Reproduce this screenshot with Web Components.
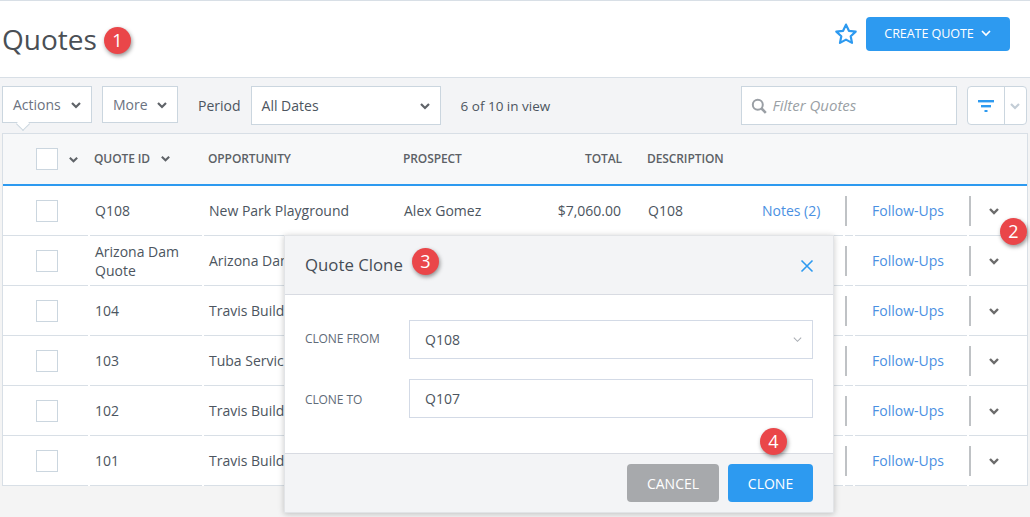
<!DOCTYPE html>
<html lang="en"><head><meta charset="utf-8"><title>Quotes</title>
<style>
html,body{margin:0;padding:0}
body{width:1030px;height:517px;overflow:hidden;background:#f4f4f4;font-family:"Open Sans",sans-serif;color:#4c5560}
</style></head><body>
<quotes-page></quotes-page>
<script>
const chev=(w=12,c='#5f6368',sw=2.4)=>`<svg width="${w}" height="${w}" viewBox="0 0 12 12" fill="none" stroke="${c}" stroke-width="${sw}" style="display:block;flex:none"><path d="M2 4l4 4 4-4"/></svg>`;
function def(name,css,html){
  customElements.define(name,class extends HTMLElement{
    constructor(){super();const r=this.attachShadow({mode:'open'});
      r.innerHTML=`<style>${css}</style>${typeof html==='function'?html(this):html}`;}
    connectedCallback(){ if(typeof html==='function'){this.shadowRoot.innerHTML=`<style>${css}</style>${html(this)}`;} }
  });
}
def('num-badge',`:host{position:absolute;width:27px;height:27px;border-radius:50%;background:#ea4649;color:#fff;font:400 18px/27px "Open Sans",sans-serif;text-align:center;box-shadow:1px 2px 4px rgba(0,0,0,.42)}`,`<slot></slot>`);

def('page-header',`:host{display:flex;align-items:center;justify-content:space-between;height:76px;background:#fff;border-top:1px solid #d8dfe6;border-bottom:1px solid #d8dfe6;box-sizing:content-box}
h1{margin:0 0 0 2px;font:400 28px/40px "Open Sans",sans-serif;color:#4a4f55}
.r{display:flex;align-items:center;gap:8px;margin:0 20px 10px 0}
.btn{display:flex;align-items:center;justify-content:center;gap:6px;width:144px;height:34px;box-sizing:border-box;padding-bottom:2px;background:#2d9af0;border-radius:4px;color:#fff;font:400 12.6px "Open Sans",sans-serif;letter-spacing:-.1px}`,
`<h1><slot></slot></h1><div class="r"><svg width="24" height="24" viewBox="0 0 24 24" fill="none" stroke="#2d9af0" stroke-width="2.2" stroke-linejoin="round"><path d="M12 2.6l2.9 6.2 6.8.8-5 4.6 1.3 6.7-6-3.3-6 3.3 1.3-6.7-5-4.6 6.8-.8z"/></svg><div class="btn">CREATE QUOTE ${chev(12,'#fff',1.7)}</div></div>`);

def('drop-btn',`:host{display:flex;align-items:center;box-sizing:border-box;height:37px;background:#fff;border:1px solid #cbd6df;color:#6b7280;font:400 14px "Open Sans",sans-serif;padding:0 9px 0 10px;justify-content:space-between;position:relative;margin-bottom:2px}
:host([notch])::after{content:"";position:absolute;left:15px;bottom:-7px;width:9px;height:9px;background:#fff;border-right:1px solid #cbd6df;border-bottom:1px solid #cbd6df;transform:rotate(45deg)}`,`<span><slot></slot></span>${chev(12,'#5f6368',2.2)}`);

def('tool-bar',`:host{display:flex;align-items:center;height:55px;background:#f3f4f6;padding:0 3px 0 2px;box-sizing:border-box;font:400 14px "Open Sans",sans-serif;color:#4c5560}
.box{box-sizing:border-box;height:39px;background:#fff;border:1px solid #cbd6df;display:flex;align-items:center}
.sel{width:190px;padding:0 9px 0 10px;justify-content:space-between;margin-left:10px}
.per{margin-left:20px}
.cnt{margin-left:20px;font-size:13.5px;width:280px}
.flt{width:216px;padding-left:9px;gap:6px;color:#9a9fa5;font-style:italic;font-size:15px}
.flt span{padding-bottom:2px}
.fb{width:60px;margin-left:10px;border-radius:4px;padding:0}
.fb>div{height:100%;display:flex;align-items:center;justify-content:center}
.a{width:36px;border-right:1px solid #cbd6df}.b{flex:1}`,
`<drop-btn notch style="width:90px">Actions</drop-btn><drop-btn style="width:76px;margin-left:10px">More</drop-btn><span class="per">Period</span>
<div class="box sel">All Dates ${chev(12,'#5f6368',2.2)}</div><span class="cnt">6 of 10 in view</span>
<div class="box flt"><svg width="16" height="16" viewBox="0 0 16 16" fill="none" stroke="#9a9fa5" stroke-width="2"><circle cx="6.8" cy="6.8" r="5"/><path d="M10.5 10.5l4.3 4.3" stroke-width="2.6"/></svg><span>Filter Quotes</span></div>
<div class="box fb"><div class="a"><svg width="16" height="12" viewBox="0 0 16 12" fill="#2d9af0"><rect width="16" height="2.4"/><rect x="3" y="5" width="10" height="2.4"/><rect x="6.5" y="10" width="3" height="2"/></svg></div><div class="b">${chev(12,'#c3cdd6',2.2)}</div></div>`);

def('table-head',`:host{display:grid;grid-template-columns:86px 114px 195px 133px 91px 1fr;height:50px;align-items:center;background:#f7f8f9;font:600 12px "Open Sans",sans-serif;color:#5c6166;letter-spacing:-.1px}
.c{display:flex;align-items:center;box-sizing:border-box;padding-bottom:2px;padding-left:5px}
.id{gap:10px}
.box{width:22px;height:22px;background:#fff;border:1px solid #cbd6df;box-sizing:border-box;margin-left:33px}
.f{display:flex;align-items:center;gap:10px}.t{justify-content:flex-end;padding-left:0}.d{padding-left:25px}`,
`<div class="f"><div class="box"></div>${chev(11,'#5f6368',2.2)}</div><div class="c id">QUOTE ID ${chev(11,'#5f6368',2.2)}</div><div class="c">OPPORTUNITY</div><div class="c">PROSPECT</div><div class="c t">TOTAL</div><div class="c d">DESCRIPTION</div>`);

def('quote-row',`:host{display:grid;grid-template-columns:85px 112px 195px 128px 90px 114px 104px 8px 112px 1fr;column-gap:2px;height:50px;font:400 14px/20px "Open Sans",sans-serif;color:#4c5560}
.c{border-bottom:1px solid #d8dfe6;display:flex;align-items:center;box-sizing:border-box;height:50px;min-width:0;white-space:nowrap;overflow:hidden}
.box{width:22px;height:22px;border:1px solid #cbd6df;box-sizing:border-box;margin-left:33px}
.id{padding-left:5px;white-space:normal;line-height:19px}
.op{padding-left:5px}.pr{padding-left:3px}
.to{justify-content:flex-end}
.de{padding-left:25px}
.no{padding-left:23px}
.fu{padding-left:17px}
a{color:#4a90e2;text-decoration:none}
.sp{align-items:flex-start;padding-top:10px}
.sp::before{content:"";width:2px;height:30px;background:#bfc2c5;flex:none}
.ch{padding-left:19px;position:relative}
.ch::before{content:"";width:2px;height:30px;background:#bfc2c5;position:absolute;left:0;top:10px}`,
h=>`<div class="c"><div class="box"></div></div><div class="c id">${h.getAttribute('qid')}</div><div class="c op">${h.getAttribute('opp')}</div><div class="c pr">${h.getAttribute('pro')||''}</div><div class="c to">${h.getAttribute('tot')||''}</div><div class="c de">${h.getAttribute('des')||''}</div><div class="c no">${h.getAttribute('notes')?`<a>${h.getAttribute('notes')}</a>`:''}</div><div class="c sp"></div><div class="c fu"><a>Follow-Ups</a></div><div class="c ch">${chev(12,'#6b6b6b',2.4)}</div>`);

def('quote-table',`:host{display:block;box-sizing:border-box;width:1026px;margin-left:2px;border:1px solid #d8dfe6;border-bottom:0;background:#fff;height:353px}
.bar{height:2px;background:#2d9af0}`,`<slot name="head"></slot><div class="bar"></div><slot></slot>`);

def('form-field',`:host{display:flex;align-items:center;height:39px}
label{width:104px;font:400 12px "Open Sans",sans-serif;color:#5f6b78;letter-spacing:-.1px}
:host([up]) label{padding-bottom:2px}
:host([down]) label{padding-top:2px}
.i{flex:1;height:39px;box-sizing:border-box;border:1px solid #d3dae6;display:flex;align-items:center;justify-content:space-between;padding:0 9px 0 15px;font:400 14px "Open Sans",sans-serif;color:#4c5560}`,
h=>`<label>${h.getAttribute('label')}</label><div class="i"><span><slot></slot></span>${h.hasAttribute('sel')?chev(11,'#a9adb3',1.1):''}</div>`);

def('clone-modal',`:host{position:absolute;left:284px;top:235px;width:550px;height:278px;box-sizing:border-box;background:#fff;border:1px solid #e2e4e7;box-shadow:0 1px 6px rgba(0,0,0,.22);display:flex;flex-direction:column;font-family:"Open Sans",sans-serif}
.h{height:59px;box-sizing:border-box;background:#f3f4f6;border-bottom:1px solid #d8dbe2;display:flex;align-items:center;justify-content:space-between;padding:2px 19px 0 20px;font:400 16.8px "Open Sans",sans-serif;color:#454c55}
.h span{padding-bottom:3px}
.b{flex:1;padding:25px 20px 0;display:flex;flex-direction:column;gap:20px}
.f{height:59px;box-sizing:border-box;background:#f3f4f6;border-top:1px solid #d8dbe2;display:flex;align-items:flex-start;justify-content:flex-end;gap:9px;padding:10px 20px 0 0}
.t{height:38px;border-radius:4px;color:#fff;font:400 14px/40px "Open Sans",sans-serif;text-align:center}
.c{width:92px;background:#a7a9ac}.k{width:85px;background:#2d9af0}`,
`<div class="h"><span>Quote Clone</span><svg width="14" height="14" viewBox="0 0 14 14" stroke="#2d9af0" stroke-width="1.6" fill="none"><path d="M1.5 1.5l11 11M12.5 1.5l-11 11"/></svg></div>
<div class="b"><form-field up label="CLONE FROM" sel>Q108</form-field><form-field down label="CLONE TO">Q107</form-field></div>
<div class="f"><div class="t c">CANCEL</div><div class="t k">CLONE</div></div>`);

const rows=[['Q108','New Park Playground','Alex Gomez','$7,060.00','Q108','Notes (2)'],['Arizona Dam Quote','Arizona Dam'],['104','Travis Build'],['103','Tuba Servic'],['102','Travis Build'],['101','Travis Build']];
const esc=s=>s||'';
def('quotes-page',`:host{display:block;position:relative;width:1030px;height:517px}`,
`<page-header>Quotes</page-header><tool-bar></tool-bar>
<quote-table><table-head slot="head"></table-head>${rows.map(r=>`<quote-row qid="${r[0]}" opp="${r[1]}" pro="${esc(r[2])}" tot="${esc(r[3])}" des="${esc(r[4])}" notes="${esc(r[5])}"></quote-row>`).join('')}</quote-table>
<clone-modal></clone-modal>
<num-badge style="left:104px;top:27px">1</num-badge><num-badge style="left:1000px;top:218px">2</num-badge><num-badge style="left:412px;top:248px">3</num-badge><num-badge style="left:760px;top:428px">4</num-badge>`);
</script>
</body></html>
